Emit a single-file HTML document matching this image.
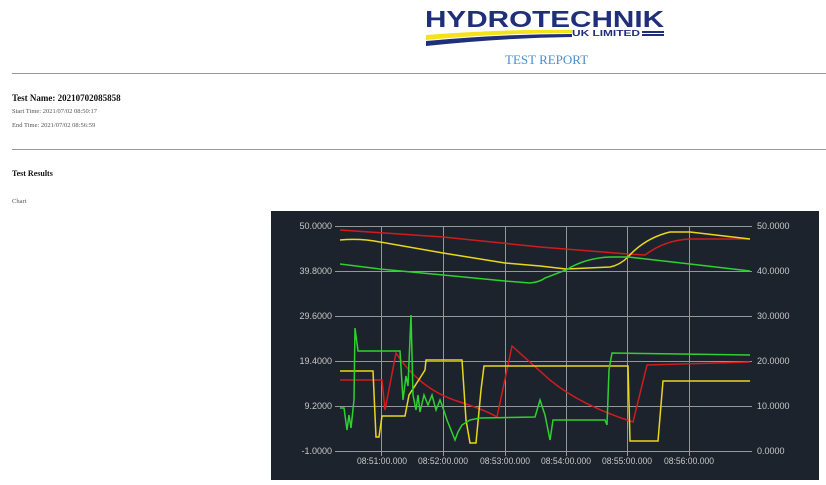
<!DOCTYPE html>
<html><head><meta charset="utf-8"><style>
body{margin:0;width:826px;height:485px;background:#fff;position:relative;overflow:hidden;font-family:"Liberation Serif",serif}
.a{position:absolute}
hr{position:absolute;margin:0;border:0;height:1px;background:#999;left:12px;width:814px}
</style></head><body>
<svg class="a" style="left:420px;top:4px" width="250" height="46" viewBox="420 4 250 46">
<text x="425" y="27" font-family="Liberation Sans,sans-serif" font-weight="bold" font-size="23" fill="#1f2f7a" textLength="239" lengthAdjust="spacingAndGlyphs">HYDROTECHNIK</text>
<path d="M426 35 Q500 29 572 30 L572 33 Q500 33 426 40 Z" fill="#f5e21a"/>
<path d="M426 41 Q500 34 572 34 L572 37 Q500 38 426 46 Z" fill="#1f2f7a"/>
<text x="572" y="36" font-family="Liberation Sans,sans-serif" font-weight="bold" font-size="8" fill="#1f2f7a" textLength="68" lengthAdjust="spacingAndGlyphs">UK LIMITED</text>
<rect x="642" y="31" width="22" height="2" fill="#1f2f7a"/><rect x="642" y="34" width="22" height="2" fill="#1f2f7a"/>
</svg>
<div class="a" style="left:505px;top:52px;font-size:13px;color:#4a8ccc">TEST REPORT</div>
<hr style="top:73px">
<div class="a" style="left:12px;top:93px;font-size:9px;font-weight:bold;color:#111">Test Name: 20210702085858</div>
<div class="a" style="left:12px;top:108px;font-size:6.5px;color:#555">Start Time: 2021/07/02 08:50:17</div>
<div class="a" style="left:12px;top:122px;font-size:6.5px;color:#555">End Time: 2021/07/02 08:56:59</div>
<hr style="top:149px">
<div class="a" style="left:12px;top:169px;font-size:8px;font-weight:bold;color:#111">Test Results</div>
<div class="a" style="left:12px;top:198px;font-size:6.5px;color:#555">Chart</div>
<svg class="a" style="left:271px;top:211px" width="548" height="269" viewBox="271 211 548 269">
<rect x="271" y="211" width="548" height="269" fill="#1d232c"/>
<g stroke="#c8c8c8" stroke-width="1" opacity="0.7">
<path d="M335 226.5H752M335 271.5H752M335 316.5H752M335 361.5H752M335 406.5H752M335 451.5H752"/>
<path d="M381.5 226V456M443.5 226V456M505.5 226V456M566.5 226V456M627.5 226V456M689.5 226V456"/>
</g>
<g font-family="Liberation Sans,sans-serif" font-size="9" fill="#c8c8c8">
<g text-anchor="end"><text x="332" y="229">50.0000</text><text x="332" y="274">39.8000</text><text x="332" y="319">29.6000</text><text x="332" y="364">19.4000</text><text x="332" y="409">9.2000</text><text x="332" y="454">-1.0000</text></g>
<text x="757" y="229">50.0000</text><text x="757" y="274">40.0000</text><text x="757" y="319">30.0000</text><text x="757" y="364">20.0000</text><text x="757" y="409">10.0000</text><text x="757" y="454">0.0000</text>
<g text-anchor="middle"><text x="382" y="464" textLength="50" lengthAdjust="spacingAndGlyphs">08:51:00.000</text><text x="443" y="464" textLength="50" lengthAdjust="spacingAndGlyphs">08:52:00.000</text><text x="505" y="464" textLength="50" lengthAdjust="spacingAndGlyphs">08:53:00.000</text><text x="566" y="464" textLength="50" lengthAdjust="spacingAndGlyphs">08:54:00.000</text><text x="627" y="464" textLength="50" lengthAdjust="spacingAndGlyphs">08:55:00.000</text><text x="689" y="464" textLength="50" lengthAdjust="spacingAndGlyphs">08:56:00.000</text></g>
</g>
<g fill="none" stroke-width="1.5">
<path stroke="#d01c1c" d="M340 230 L443 237 L540 247 L628 254 L645 255 Q665 240 690 239 L750 239"/>
<path stroke="#e8d81c" d="M340 240 Q360 238 380 242 L443 253 L505 263 L540 266 L566 269 L610 267 Q620 265 628 257 Q645 238 670 232 L690 232 L750 239"/>
<path stroke="#2ed12e" d="M340 264 L380 269 L443 275 L505 281 L530 283 Q540 282 545 278 L566 270 Q585 258 610 257 L628 257 L690 264 L750 271"/>
<path stroke="#d01c1c" d="M340 380 L382 380 L385 410 L396 353 Q420 390 460 402 Q485 410 497 417 L512 346 Q530 362 550 380 Q580 405 633 422 L647 365 L750 362"/>
<path stroke="#e8d81c" d="M340 371 L373 371 L376 437 L379 437 L382 416 L405 416 L409 395 L420 378 L425 370 L426 360 L462 360 L466 420 L470 443 L476 443 L481 390 L484 366 L628 366 L630 441 L658 441 L663 381 L750 381"/>
<path stroke="#2ed12e" d="M340 408 L344 408 L347 430 L349 415 L351 428 L354 400 L355 328 L358 351 L400 351 L403 400 L406 376 L408 386 L411 315 L413 395 L416 410 L418 395 L420 412 L424 395 L428 405 L432 395 L436 410 L440 400 L443 408 L447 420 L451 430 L455 440 L458 432 L462 425 L470 420 L480 418 L535 417 L540 400 L545 415 L550 440 L553 420 L605 420 L607 425 L609 370 L612 353 L750 355"/>
</g>
</svg>
</body></html>
